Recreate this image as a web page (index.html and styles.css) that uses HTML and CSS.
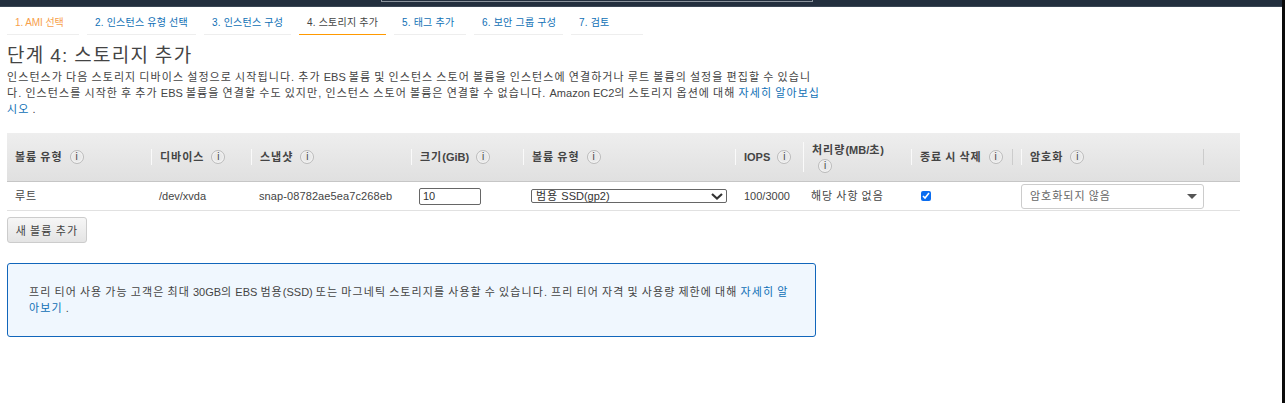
FILE: index.html
```html
<!DOCTYPE html>
<html lang="ko">
<head>
<meta charset="utf-8">
<title>스토리지 추가</title>
<link rel="stylesheet" href="styles.css">
</head>
<body>
<div class="topbar"><div class="topbox"></div></div>
<div class="edge"></div>
<main class="page">
  <nav class="steps">
    <a class="step step-done w1">1. AMI 선택</a>
    <a class="step w2">2. 인스턴스 유형 선택</a>
    <a class="step w3">3. 인스턴스 구성</a>
    <a class="step step-active w4">4. 스토리지 추가</a>
    <a class="step w5">5. 태그 추가</a>
    <a class="step w6">6. 보안 그룹 구성</a>
    <a class="step w7">7. 검토</a>
  </nav>
  <h1 class="title">단계 4: 스토리지 추가</h1>
  <p class="intro">인스턴스가 다음 스토리지 디바이스 설정으로 시작됩니다. 추가 <span class="lat">EBS</span> 볼륨 및 인스턴스 스토어 볼륨을 인스턴스에 연결하거나 루트 볼륨의 설정을 편집할 수 있습니<br>다. 인스턴스를 시작한 후 추가 <span class="lat">EBS</span> 볼륨을 연결할 수도 있지만, 인스턴스 스토어 볼륨은 연결할 수 없습니다. <span class="lat">Amazon EC2</span>의 스토리지 옵션에 대해 <a class="link">자세히 알아보십<br>시오</a> .</p>
  <div class="table">
    <div class="row head">
      <div class="th c1"><span>볼륨 유형</span><i class="info">i</i></div>
      <div class="th c2"><span>디바이스</span><i class="info">i</i></div>
      <div class="th c3"><span>스냅샷</span><i class="info">i</i></div>
      <div class="th c4"><span>크기<span class="lat">(GiB)</span></span><i class="info">i</i></div>
      <div class="th c5"><span>볼륨 유형</span><i class="info">i</i></div>
      <div class="th c6"><span class="lat">IOPS</span><i class="info">i</i></div>
      <div class="th c7 wrap"><span class="wrap-label">처리량<span class="lat">(MB/</span>초<span class="lat">)</span></span><i class="info">i</i></div>
      <div class="th c8"><span>종료 시 삭제</span><i class="info">i</i></div>
      <div class="th c9"><span>암호화</span><i class="info">i</i></div>
    </div>
    <div class="row body">
      <div class="td c1 ko">루트</div>
      <div class="td c2">/dev/xvda</div>
      <div class="td c3 snap">snap-08782ae5ea7c268eb</div>
      <div class="td c4"><input class="size" type="text" value="10"></div>
      <div class="td c5"><div class="native"><span><span class="ko">범용</span> SSD(gp2)</span><svg width="14" height="9" viewBox="0 0 14 9"><path d="M2 2l5 4.5L12 2" fill="none" stroke="#333" stroke-width="2.2"/></svg></div></div>
      <div class="td c6">100/3000</div>
      <div class="td c7 ko">해당 사항 없음</div>
      <div class="td c8"><input class="check" type="checkbox" checked></div>
      <div class="td c9"><div class="enc"><span class="ko">암호화되지 않음</span><b class="caret"></b></div></div>
    </div>
  </div>
  <button class="add" type="button">새 볼륨 추가</button>
  <div class="notice">프리 티어 사용 가능 고객은 최대 <span class="lat">30GB</span>의 <span class="lat">EBS</span> 범용<span class="lat">(SSD)</span> 또는 마그네틱 스토리지를 사용할 수 있습니다. 프리 티어 자격 및 사용량 제한에 대해 <a class="link">자세히 알<br>아보기</a> .</div>
</main>
</body>
</html>
```
FILE: styles.css
```css
* { box-sizing: border-box; }
html, body { margin: 0; padding: 0; }
body { width: 1285px; height: 403px; overflow: hidden; background: #fff; color: #444; font: 11px/16px "Liberation Sans", "Noto Sans CJK KR", sans-serif; position: relative; }
.topbar { height: 7px; background: #232f3e; border-bottom: 1px solid #3a4654; position: relative; }
.topbox { position: absolute; left: 381px; top: -4px; width: 432px; height: 6px; border: 1px solid #8a929b; }
.edge { position: absolute; right: 0; top: 0; width: 3px; height: 403px; background: #0a0a0a; }
.page { padding: 0 0 0 7px; }
.steps { display: flex; gap: 8px; height: 28px; }
.step { display: block; height: 28px; padding: 8px 0 0 8px; font-size: 10px; line-height: 16px; letter-spacing: .2px; color: #0f6fb5; border-bottom: 1px solid #eee; white-space: nowrap; }
.step-done { color: #f7a04b; letter-spacing: -.1px; }
.step-active { color: #444; border-bottom: 1px solid #f90; }
.w1 { width: 72px; } .w2 { width: 109px; } .w3 { width: 87px; } .w4 { width: 87px; } .w5 { width: 72px; } .w6 { width: 89px; } .w7 { width: 72px; }
.title { margin: 8px 0 0; font-weight: 400; font-size: 19px; line-height: 26px; letter-spacing: 1.3px; word-spacing: -1px; color: #444; }
.intro { margin: 0; width: 830px; height: 64px; font-size: 11px; line-height: 16px; letter-spacing: 1.08px; word-spacing: -1.08px; white-space: nowrap; }
.lat { letter-spacing: 0; word-spacing: 0; }
.ko { letter-spacing: 1px; word-spacing: -1px; }
.link { color: #0f6fb5; }
.table { width: 1233px; }
.row { display: flex; }
.head.row { height: 49px; background: linear-gradient(#eee, #e0e0e0); border-bottom: 1px solid #c6c6c6; align-items: center; }
.body { height: 29px; border-bottom: 1px solid #e1e1e1; align-items: center; }
.c1 { width: 144px; } .c2 { width: 100px; } .c3 { width: 160px; } .c4 { width: 112px; } .c5 { width: 212px; } .c6 { width: 68px; } .c7 { width: 108px; } .c8 { width: 110px; } .c9 { width: 219px; }
.th { height: 16px; display: flex; align-items: center; gap: 7px; padding-left: 9px; font-weight: 700; font-size: 11px; letter-spacing: 1px; word-spacing: -1px; color: #444; position: relative; white-space: nowrap; }
.th.c1 { padding-left: 8px; }
.th::before { content: ""; position: absolute; left: 0; top: 0; width: 1px; height: 16px; background: #fafafa; }
.c1.th::before { display: none; }
.th.c9::after { content: ""; position: absolute; left: 182px; top: 0; width: 1px; height: 16px; background: #ccc; }
.th.c8::after { content: ""; position: absolute; left: 101px; top: 0; width: 1px; height: 16px; background: #ccc; }
.th.wrap { height: 30px; flex-wrap: wrap; align-content: center; gap: 1px 0; }
.th.wrap::before { height: 30px; }
.wrap-label { flex: 0 0 100%; }
.th.wrap .info { margin-left: 6px; }
.info { flex: none; width: 14px; height: 14px; border-radius: 50%; border: 1px solid #bbb; background: #e9e9e9; box-shadow: inset 0 0 0 1px #f5f5f5; color: #444; letter-spacing: 0; font: normal 400 10px/12px "Liberation Sans", sans-serif; text-align: center; }
.td { padding-left: 8px; font-size: 11px; color: #444; }
.td.c6 { padding-left: 9px; }
.td.c9 { padding-left: 0; }
.snap { letter-spacing: .1px; }
.size { display: block; width: 62px; height: 17px; padding: 0 3px; border: 1px solid #666; border-radius: 2px; font: 11px/15px "Liberation Sans", sans-serif; color: #333; }
.native { width: 196px; height: 14px; padding: 0 2px 0 4px; border: 1px solid #666; border-radius: 2px; display: flex; align-items: center; justify-content: space-between; color: #333; line-height: 12px; }
.check { display: block; margin: 0 0 0 2px; width: 10px; height: 10px; accent-color: #0a6df0; }
.enc { width: 183px; height: 25px; border: 1px solid #ccc; border-radius: 3px; padding-left: 8px; display: flex; align-items: center; justify-content: space-between; color: #666; }
.caret { width: 0; height: 0; margin-right: 6px; border: 5px solid transparent; border-top-color: #555; border-bottom-width: 0; }
.add { display: block; width: 80px; height: 26px; margin-top: 6px; padding: 0; border: 1px solid #ccc; border-radius: 3px; background: linear-gradient(#f6f6f6, #e4e4e4); font: 11px "Liberation Sans", "Noto Sans CJK KR", sans-serif; letter-spacing: 1.2px; word-spacing: -1.2px; color: #444; }
.notice { width: 809px; height: 74px; margin-top: 20px; padding: 20px 21px 0; background: #f0f7fe; border: 1px solid #1166bb; border-radius: 3px; font-size: 11px; line-height: 16px; letter-spacing: 1.08px; word-spacing: -1.08px; white-space: nowrap; color: #444; }
```
